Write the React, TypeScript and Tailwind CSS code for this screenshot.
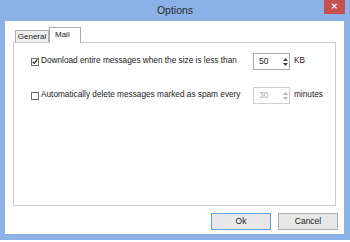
import React from 'react'

const font = { fontFamily: '"Liberation Sans", Arial, sans-serif' }

function Spinner ({ disabled }: { disabled?: boolean }): React.JSX.Element {
  const c = disabled ? '#b5b5b5' : '#404040'
  return (
    <div className="flex flex-col items-center justify-center w-[6px] h-full gap-[2px]">
      <svg width="5" height="3" viewBox="0 0 5 3"><path d="M0 3 L2.5 0 L5 3 Z" fill={c} /></svg>
      <svg width="5" height="3" viewBox="0 0 5 3"><path d="M0 0 L2.5 3 L5 0 Z" fill={c} /></svg>
    </div>
  )
}

function NumberBox ({ value, disabled }: { value: string, disabled?: boolean }): React.JSX.Element {
  return (
    <div className={`flex items-center w-[37px] h-[17px] border bg-white pl-[5px] pr-[1px] ${disabled ? 'border-[#cfcfcf]' : 'border-[#ababab]'}`}>
      <span className={`flex-1 text-[8.5px] leading-none ${disabled ? 'text-[#a8a8a8]' : 'text-[#1a1a1a]'}`}>{value}</span>
      <Spinner disabled={disabled} />
    </div>
  )
}

function CheckBox ({ checked }: { checked?: boolean }): React.JSX.Element {
  return (
    <div className="w-[8px] h-[8px] border border-[#6f6f6f] bg-white flex items-center justify-center shrink-0">
      {checked && (
        <svg width="7" height="7" viewBox="0 0 7 7">
          <path d="M0.8 3.6 L2.7 5.6 L6.3 0.9" stroke="#202020" strokeWidth="1.4" fill="none" />
        </svg>
      )}
    </div>
  )
}

export default function App (): React.JSX.Element {
  return (
    <div className="w-[350px] h-[242px] bg-white" style={font}>
      <div className="w-[350px] h-[240px] bg-[#8cb0e8] flex flex-col">
        <div className="relative h-[21px] flex items-center justify-center shrink-0">
          <span className="text-[10.5px] text-[#2a2a2a] pt-[1px]">Options</span>
          <div className="absolute right-[5px] top-0 w-[21px] h-[14px] bg-[#c75050] flex items-center justify-center">
            <span className="text-white text-[8px] font-bold leading-none">✕</span>
          </div>
        </div>
        <div className="ml-[5px] mr-[6px] h-[213px] bg-white flex flex-col pl-[8px] pr-[8px]">
          <div className="flex items-end h-[21px] pl-[2px] shrink-0">
            <div className="w-[34px] h-[12px] border border-b-0 border-[#acacac] bg-[#f0f0f0] flex items-center justify-center leading-none">
              <span className="text-[8px] text-[#1a1a1a] leading-none">General</span>
            </div>
            <div className="w-[32px] h-[16px] border border-b-0 border-[#acacac] bg-white flex items-start pl-[5px] pt-[3px] relative z-10 -mb-[1px] leading-none">
              <span className="text-[8px] text-[#1a1a1a] leading-none">Mail</span>
            </div>
          </div>
          <div className="h-[164px] border border-[#cccccc] bg-white flex flex-col pl-[17px] pt-[10px] gap-[17px] shrink-0">
            <div className="flex items-center h-[17px]">
              <div className="flex items-center w-[222px] gap-[2px]">
                <CheckBox checked />
                <span className="text-[8.25px] text-[#1a1a1a] leading-none whitespace-nowrap">Download entire messages when the size is less than</span>
              </div>
              <NumberBox value="50" />
              <span className="ml-[4px] text-[8.25px] text-[#1a1a1a] leading-none">KB</span>
            </div>
            <div className="flex items-center h-[17px]">
              <div className="flex items-center w-[222px] gap-[2px]">
                <CheckBox />
                <span className="text-[8.25px] text-[#1a1a1a] leading-none whitespace-nowrap">Automatically delete messages marked as spam every</span>
              </div>
              <NumberBox value="30" disabled />
              <span className="ml-[4px] text-[8.25px] text-[#1a1a1a] leading-none">minutes</span>
            </div>
          </div>
          <div className="flex justify-end gap-[7px] mt-[7px] mr-[-2px]">
            <button className="w-[60px] h-[17px] border border-[#5fa3e6] bg-[#e8e8e8] text-[8.5px] text-[#1a1a1a] leading-none">Ok</button>
            <button className="w-[60px] h-[17px] border border-[#acacac] bg-[#e8e8e8] text-[8.5px] text-[#1a1a1a] leading-none">Cancel</button>
          </div>
        </div>
      </div>
    </div>
  )
}
